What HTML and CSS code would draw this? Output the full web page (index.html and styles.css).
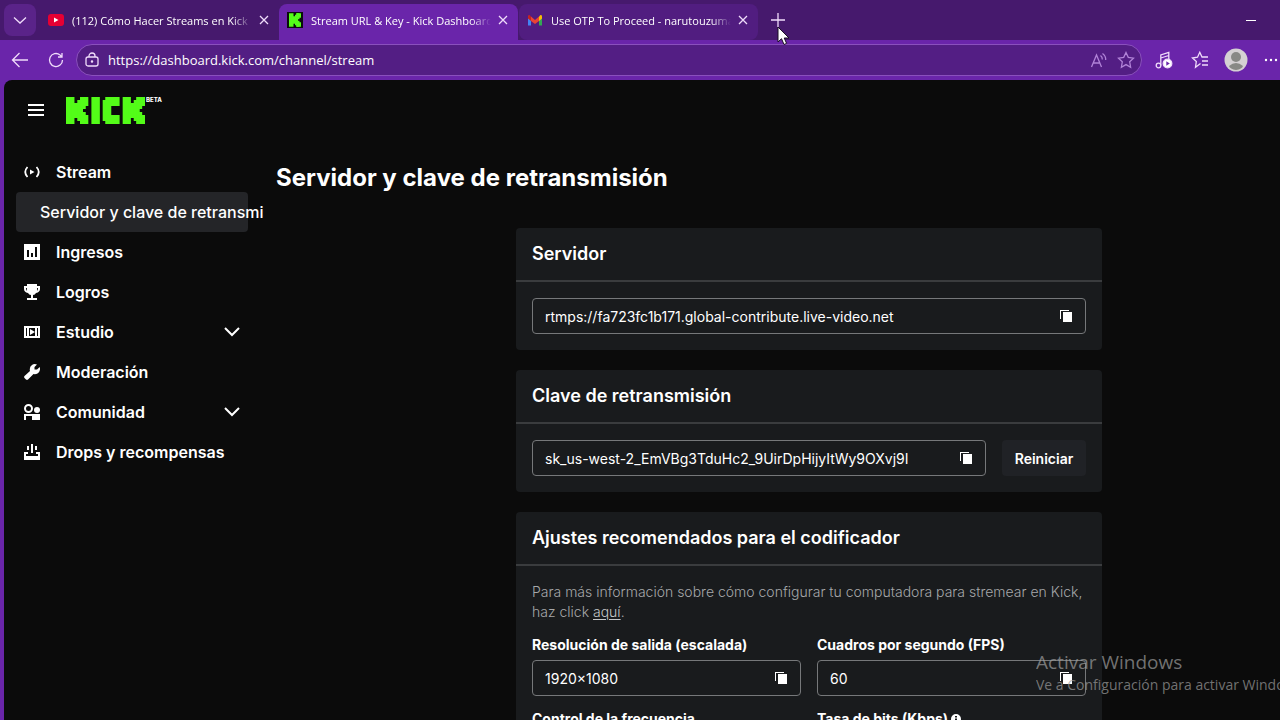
FILE: index.html
```html
<!DOCTYPE html>
<html lang="es">
<head>
  <meta charset="UTF-8" />
  <meta name="viewport" content="width=device-width, initial-scale=1" />
  <title>Stream URL &amp; Key - Kick Dashboard</title>
  <link rel="stylesheet" href="styles.css">
</head>
<body>
  <svg class="defs" width="0" height="0" aria-hidden="true">
    <symbol id="kick-k" viewBox="0 0 8 9">
      <rect x="0" y="0" width="3" height="9" />
      <rect x="2" y="2" width="4" height="5" />
      <rect x="4" y="1" width="2" height="7" />
      <rect x="5" y="0" width="1" height="9" />
      <rect x="5" y="0" width="2" height="4" />
      <rect x="5" y="0" width="3" height="3" />
      <rect x="5" y="5" width="2" height="4" />
      <rect x="5" y="6" width="3" height="3" />
    </symbol>
    <symbol id="copy" viewBox="0 0 12 12">
      <path d="M0 0h9v1H1v8H0z" />
      <path d="M3 2h9v10H3z" />
    </symbol>
    <symbol id="close" viewBox="0 0 16 16">
      <path d="M4 4l8 8M12 4l-8 8" />
    </symbol>
    <symbol id="chevron" viewBox="0 0 16 16">
      <path d="M1 4l7 7 7-7" />
    </symbol>
  </svg>

  <div class="browser">
    <div class="tabs">
      <button class="tab-list" aria-label="Buscar pestañas">
        <svg class="line" width="16" height="16" viewBox="0 0 16 16"><path d="M2 5.500l6 5.500 6-5.500" /></svg>
      </button>

      <div class="tab">
        <svg width="16" height="16" viewBox="0 0 16 16"><rect y="2" width="16" height="12" rx="3" fill="#e60033" /><path d="M6 5.500v5L10.500 8z" fill="#fff" /></svg>
        <span class="tab-title">(112) Cómo Hacer Streams en Kick</span>
        <button class="tab-close" aria-label="Cerrar"><svg class="line" width="16" height="16"><use href="#close" /></svg></button>
      </div>
      <div class="tab active">
        <svg width="16" height="16" viewBox="0 0 16 16"><rect width="16" height="16" fill="#0b0c0c" /><use href="#kick-k" x="2" y="1" width="12" height="14" fill="#53fc18" /></svg>
        <span class="tab-title">Stream URL &amp; Key - Kick Dashboard</span>
        <button class="tab-close" aria-label="Cerrar"><svg class="line" width="16" height="16"><use href="#close" /></svg></button>
      </div>
      <div class="tab dim">
        <svg width="16" height="16" viewBox="0 0 16 16">
          <path d="M1 3.500v10h3V7z" fill="#4285f4" />
          <path d="M15 3.500v10h-3V7z" fill="#34a853" />
          <path d="M12 4.500l1.500-1.500Q15 2.500 15 4.500V6.500l-3 2.500z" fill="#fbbc04" />
          <path d="M4 4.500L8 8l4-3.500V9l-4 3-4-3z" fill="#ea4335" />
          <path d="M4 4.500L2.500 3Q1 2.500 1 4.500V6.500L4 9z" fill="#c5221f" />
        </svg>
        <span class="tab-title">Use OTP To Proceed - narutouzumaki</span>
        <button class="tab-close" aria-label="Cerrar"><svg class="line" width="16" height="16"><use href="#close" /></svg></button>
      </div>

      <button class="new-tab" aria-label="Nueva pestaña">
        <svg class="line" width="16" height="16" viewBox="0 0 16 16"><path d="M8 1v14M1 8h14" /></svg>
        <svg class="cursor" width="14" height="20" viewBox="0 0 14 20"><path d="M1 1v15l3.500-3.300L7 18.500l2.600-1.100L7.200 12H12z" fill="#fff" stroke="#1b1024" /></svg>
      </button>
      <button class="minimize" aria-label="Minimizar"></button>
    </div>

    <div class="toolbar">
      <button class="tool" aria-label="Atrás">
        <svg class="line" width="18" height="18" viewBox="0 0 18 18"><path d="M17 9H1.500M8.500 2L1.500 9l7 7" /></svg>
      </button>
      <button class="tool" aria-label="Actualizar">
        <svg class="line" width="16" height="16" viewBox="0 0 16 16"><path d="M14.500 8A6.500 6.500 0 1 1 12 2.900L14 5M14 1v4h-4" /></svg>
      </button>
      <div class="url-bar">
        <svg class="line" width="14" height="16" viewBox="0 0 14 16"><rect x="1" y="5" width="12" height="9" rx="2" /><path d="M4 5V4a3 3 0 0 1 6 0v1" /><circle cx="7" cy="9.500" r=".6" /></svg>
        <input type="text" aria-label="Dirección" value="https://dashboard.kick.com/channel/stream" />
        <button aria-label="Leer en voz alta">
          <svg class="line" width="18" height="16" viewBox="0 0 18 16"><path d="M1.500 15L6.500 3l5 12M3.200 11h6.600M10.500 3.500q2 1.500 1.800 4M12.500 1.500q3.500 2.500 3.200 6.500" /></svg>
        </button>
        <button aria-label="Favorito">
          <svg class="line" width="18" height="18" viewBox="0 0 18 18"><path d="M9 1.500l2.300 4.900 5.200.7-3.800 3.700.9 5.400L9 13.600l-4.600 2.600.9-5.400L1.500 7.100l5.200-.7z" /></svg>
        </button>
      </div>
      <button class="tool" aria-label="Multimedia">
        <svg class="line" width="18" height="18" viewBox="0 0 18 18"><circle cx="3.500" cy="14.500" r="2.300" /><path d="M5.800 14.500V4l8-2.500V8M5.800 7l8-2.500" /><circle cx="12.500" cy="12.500" r="4.300" fill="#fff" /><path d="M11.300 10.300v4.400l3.500-2.200z" fill="#6a25aa" stroke="none" /></svg>
      </button>
      <button class="tool" aria-label="Favoritos">
        <svg class="line" width="18" height="18" viewBox="0 0 18 18"><path d="M9.500 12.500l-5 3.800.8-5.800L1.500 7l5-.8 2.300-4.900L11 6h6M11 10h6M11 14h6" /></svg>
      </button>
      <button class="tool" aria-label="Perfil">
        <svg width="24" height="24" viewBox="0 0 24 24"><circle cx="12" cy="12" r="11.500" fill="#d5d1d3" /><circle cx="12" cy="9" r="5" fill="#888985" /><path d="M5 18q7-6 14 0-1 3-7 4-6-1-7-4z" fill="#888985" /></svg>
      </button>
      <button class="tool more" aria-label="Más">
        <svg width="16" height="16" viewBox="0 0 16 16" fill="#fff"><circle cx="2" cy="8" r="1.200" /><circle cx="7" cy="8" r="1.200" /><circle cx="12" cy="8" r="1.200" /></svg>
      </button>
    </div>
  </div>

  <div class="App">
    <header class="App-header">
      <button class="menu" aria-label="Menú">
        <svg width="16" height="12" viewBox="0 0 16 12" fill="#fff"><path d="M0 0h16v2H0zM0 5h16v2H0zM0 10h16v2H0z" /></svg>
      </button>
      <a class="logo" href="#" aria-label="Kick">
        <svg width="79" height="27" viewBox="0 0 28 9" preserveAspectRatio="none" fill="#53fc18">
          <use href="#kick-k" width="8" height="9" />
          <rect x="9" width="3" height="9" />
          <rect x="13" y="1" width="3" height="7" />
          <rect x="14" width="2" height="9" />
          <rect x="14" width="5" height="3" />
          <rect x="14" y="6" width="5" height="3" />
          <use href="#kick-k" x="20" width="8" height="9" />
        </svg>
        <span class="beta">BETA</span>
      </a>
    </header>

    <div class="layout">
      <nav class="sidebar">
        <a class="item" href="#">
          <svg width="16" height="16" viewBox="0 0 16 16"><path d="M3.500 3Q-1 8 3.500 13M12.500 3Q17 8 12.500 13" fill="none" stroke="#fff" stroke-width="1.800" /><path d="M6 5.500v5L10.500 8z" /></svg>
          Stream
        </a>
        <a class="item sub" href="#">Servidor y clave de retransmisión</a>
        <a class="item" href="#">
          <svg width="16" height="16" viewBox="0 0 16 16"><path fill-rule="evenodd" d="M0 0h16v16H0zM3 6v7h2V6zM7 9v4h2V9zM11 3v10h2V3z" /></svg>
          Ingresos
        </a>
        <a class="item" href="#">
          <svg width="16" height="16" viewBox="0 0 16 16"><path fill-rule="evenodd" d="M3 0h10v2h3v3q0 3-4 4-1 2-3 2v3h4v2H3v-2h4v-3q-2 0-3-2-4-1-4-4V2h3zM3 4H2q0 2 1 3zM13 4v3q1-1 1-3z" /></svg>
          Logros
        </a>
        <button class="item">
          <svg width="16" height="16" viewBox="0 0 16 16"><path fill-rule="evenodd" d="M0 2h16v12H0zM2 4v8h1V4zM5 4v8h6V4zM13 4v8h1V4z" /><path d="M6 5v6l5-3z" /></svg>
          Estudio
          <svg class="chevron" width="16" height="16"><use href="#chevron" /></svg>
        </button>
        <a class="item" href="#">
          <svg width="16" height="16" viewBox="0 0 16 16"><path d="M13 .500L10.500 3v2.500H13L15.700 3Q17 7 13.500 9.500q-2 1-4 .5L4 15.500q-1 .8-2 0l-1.500-1.500q-.8-1 0-2L6 7Q5 3 8 1q2-1.500 5-.500z" /></svg>
          Moderación
        </a>
        <button class="item">
          <svg width="16" height="16" viewBox="0 0 16 16"><circle cx="4.500" cy="4.500" r="3.500" fill="none" stroke="#fff" stroke-width="2" /><circle cx="13" cy="6" r="3" /><path d="M0 10h16v6H8v-4H2v4H0z" /></svg>
          Comunidad
          <svg class="chevron" width="16" height="16"><use href="#chevron" /></svg>
        </button>
        <a class="item" href="#">
          <svg width="16" height="16" viewBox="0 0 16 16"><path d="M7 0h2v9H7zM3 2h2v4H3zM11 2h2v4h-2zM0 8h4v2H2v2h12v-2h-2V8h4v8H0z" /></svg>
          Drops y recompensas
        </a>
      </nav>

      <main class="content">
        <h1>Servidor y clave de retransmisión</h1>

        <div class="cards">
          <section class="card">
            <h2 id="servidorTitle">Servidor</h2>
            <div class="card-body">
              <div class="field">
                <input type="text" aria-labelledby="servidorTitle" value="rtmps://fa723fc1b171.global-contribute.live-video.net" readonly />
                <button class="copy" aria-label="Copiar"><svg width="12" height="12"><use href="#copy" /></svg></button>
              </div>
            </div>
          </section>

          <section class="card">
            <h2 id="claveTitle">Clave de retransmisión</h2>
            <div class="card-body key-row">
              <div class="field">
                <input type="text" aria-labelledby="claveTitle" value="sk_us-west-2_EmVBg3TduHc2_9UirDpHijyItWy9OXvj9I" readonly />
                <button class="copy" aria-label="Copiar"><svg width="12" height="12"><use href="#copy" /></svg></button>
              </div>
              <button class="reset">Reiniciar</button>
            </div>
          </section>

          <section class="card">
            <h2>Ajustes recomendados para el codificador</h2>
            <div class="card-body">
              <p>Para más información sobre cómo configurar tu computadora para stremear en Kick, haz click <a href="#">aquí</a>.</p>
              <div class="settings">
                <div class="form-group">
                  <label for="resolucion">Resolución de salida (escalada)</label>
                  <div class="field">
                    <input type="text" id="resolucion" value="1920×1080" readonly />
                    <button class="copy" aria-label="Copiar"><svg width="12" height="12"><use href="#copy" /></svg></button>
                  </div>
                </div>
                <div class="form-group">
                  <label for="fps">Cuadros por segundo (FPS)</label>
                  <div class="field">
                    <input type="text" id="fps" value="60" readonly />
                    <button class="copy" aria-label="Copiar"><svg width="12" height="12"><use href="#copy" /></svg></button>
                  </div>
                </div>
                <div class="form-group">
                  <label for="control">Control de la frecuencia</label>
                  <div class="field"><input type="text" id="control" readonly /></div>
                </div>
                <div class="form-group">
                  <label for="bits">Tasa de bits (Kbps)
                    <svg width="10" height="10" viewBox="0 0 10 10"><path fill-rule="evenodd" fill="#fff" d="M5 0a5 5 0 1 1 0 10A5 5 0 0 1 5 0zM4 2v1.500h2V2zM4 4.500V8h2V4.500z" /></svg>
                  </label>
                  <div class="field"><input type="text" id="bits" readonly /></div>
                </div>
              </div>
            </div>
          </section>
        </div>
      </main>
    </div>
  </div>

  <div class="watermark">
    <div class="watermark-title">Activar Windows</div>
    <div>Ve a Configuración para activar Windows.</div>
  </div>
</body>
</html>
```

FILE: styles.css
```css
* {
  box-sizing: border-box;
}

body {
  margin: 0;
  height: 100vh;
  display: flex;
  flex-direction: column;
  overflow: hidden;
  background-color: #6a25aa;
  color: #fff;
  font-family: Inter, sans-serif;
}

button {
  display: flex;
  align-items: center;
  justify-content: center;
  padding: 0;
  border: none;
  background: none;
  color: inherit;
  font-family: inherit;
  cursor: pointer;
}

input {
  flex: 1;
  min-width: 0;
  padding: 0;
  border: none;
  outline: none;
  background: none;
  color: inherit;
  font-family: inherit;
}

svg {
  flex-shrink: 0;
}

.defs {
  position: absolute;
}

.line {
  fill: none;
  stroke: #f0dcfa;
  stroke-width: 1.3;
}

/* Barra del navegador */
.browser {
  flex-shrink: 0;
  font-family: "Open Sans", sans-serif;
}

.tabs {
  display: flex;
  height: 40px;
  padding: 4px 24px 0 4px;
  background-color: #46196d;
}

.tab-list {
  width: 32px;
  height: 32px;
  margin-right: 4px;
  border-radius: 8px;
  background-color: #5a2389;
}

.tab {
  display: flex;
  align-items: center;
  gap: 8px;
  flex: 0 1 239px;
  min-width: 0;
  padding: 0 7px 4px 8px;
  border-radius: 8px 8px 0 0;
  font-size: 11px;
}

.tab.active {
  background-color: #6a25aa;
}

.tab.dim {
  margin-left: 1px;
  background-color: #511d80;
  border-radius: 8px;
}

.tab-title {
  flex: 1;
  overflow: hidden;
  white-space: nowrap;
  -webkit-mask-image: linear-gradient(to left, transparent, #000 20px);
  mask-image: linear-gradient(to left, transparent, #000 20px);
}

.tab-close {
  width: 16px;
  height: 16px;
  margin-left: -4px;
}

.new-tab {
  position: relative;
  width: 32px;
  height: 32px;
  margin-left: 4px;
}

.cursor {
  position: absolute;
  left: 15px;
  top: 22px;
}

.minimize {
  width: 10px;
  height: 1px;
  margin: 16px 0 0 auto;
  background-color: #fff;
}

.toolbar {
  display: flex;
  align-items: center;
  height: 40px;
  padding-left: 2px;
}

.tool {
  flex-shrink: 0;
  width: 36px;
  height: 36px;
}

.more {
  width: 26px;
  justify-content: flex-end;
}

.url-bar {
  display: flex;
  align-items: center;
  gap: 9px;
  flex: 1;
  height: 32px;
  margin: 0 4px 0 2px;
  padding: 0 6px 0 8px;
  border: 1px solid #8a50bd;
  border-radius: 16px;
  background-color: #531e84;
}

.url-bar input {
  font-size: 13px;
}

.url-bar button .line {
  stroke: #b183d8;
}

/* Panel */
.App {
  flex: 1;
  min-height: 0;
  margin-left: 4px;
  border-top-left-radius: 8px;
  background-color: #0b0b0b;
  overflow: hidden;
}

.App-header {
  display: flex;
  align-items: center;
  gap: 22px;
  height: 60px;
  padding: 0 24px;
}

.logo {
  display: flex;
  gap: 1px;
  color: #fff;
  text-decoration: none;
}

.beta {
  font-size: 6px;
  line-height: 6px;
  font-weight: 800;
}

.layout {
  display: flex;
}

.sidebar {
  flex: 0 0 260px;
  padding: 12px 16px 12px 12px;
  overflow: hidden;
}

.item {
  display: flex;
  align-items: center;
  justify-content: flex-start;
  gap: 16px;
  width: 100%;
  height: 40px;
  padding: 0 8px;
  border-radius: 4px;
  color: #fff;
  fill: #fff;
  font-size: 16px;
  font-weight: 600;
  text-decoration: none;
  white-space: nowrap;
}

.item.sub {
  padding-left: 24px;
  background-color: #242528;
  font-weight: 500;
}

.chevron {
  margin-left: auto;
  fill: none;
  stroke: #fff;
  stroke-width: 2;
}

.content {
  flex: 1;
  min-width: 0;
  padding: 20px 12px;
}

h1 {
  margin: 0 0 32px;
  font-size: 24px;
  line-height: 36px;
  font-weight: 700;
}

.cards {
  display: flex;
  flex-direction: column;
  gap: 20px;
  max-width: 826px;
  padding-left: 240px;
}

.card {
  border-radius: 4px;
  background-color: #191b1d;
}

h2 {
  margin: 0;
  padding: 13px 16px;
  border-bottom: 2px solid #3a3c3e;
  font-size: 18px;
  line-height: 26px;
  font-weight: 600;
}

.card-body {
  padding: 16px;
}

.key-row {
  display: flex;
  gap: 16px;
}

.field {
  display: flex;
  flex: 1;
  align-items: center;
  height: 36px;
  padding: 0 12px;
  border: 1px solid #76787a;
  border-radius: 4px;
}

.field input {
  font-size: 14px;
}

.copy {
  width: 14px;
  height: 20px;
  fill: #fff;
}

.reset {
  width: 84px;
  height: 36px;
  border-radius: 4px;
  background-color: #202226;
  font-size: 14px;
  font-weight: 600;
}

.card-body p {
  margin: 0 0 12px;
  color: #a6a8aa;
  font-size: 14px;
  font-weight: 300;
  line-height: 20px;
}

.card-body p a {
  color: #c4c6c8;
  text-underline-offset: 2px;
}

.settings {
  display: grid;
  grid-template-columns: repeat(2, minmax(0, 1fr));
  gap: 12px 16px;
}

.form-group {
  display: flex;
  flex-direction: column;
  gap: 4px;
}

.form-group .field {
  flex: none;
}

label {
  font-size: 14px;
  line-height: 22px;
  font-weight: 700;
}

/* Marca de agua del escritorio */
.watermark {
  position: absolute;
  left: 1036px;
  right: 0;
  bottom: 25px;
  overflow: hidden;
  color: rgba(160, 160, 160, 0.7);
  font-family: "Open Sans", sans-serif;
  font-size: 14px;
  line-height: 20px;
  white-space: nowrap;
  pointer-events: none;
}

.watermark-title {
  font-size: 19px;
  line-height: 26px;
}
```
